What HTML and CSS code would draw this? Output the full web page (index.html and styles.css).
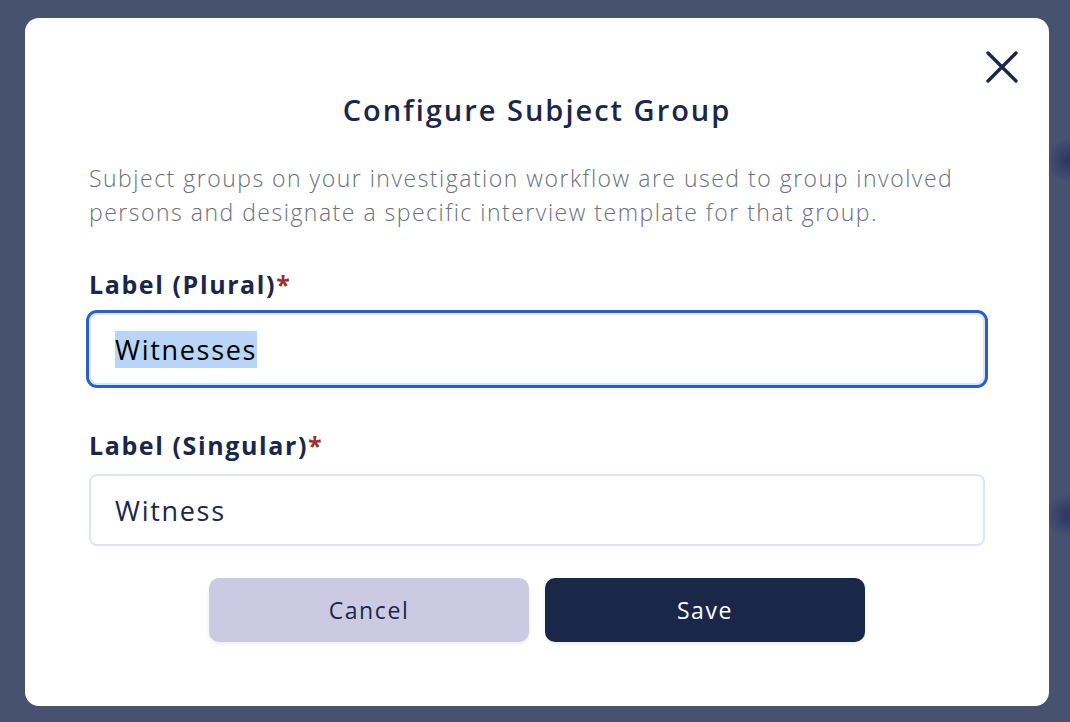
FILE: index.html
```html
<!DOCTYPE html>
<html lang="en">
<head>
  <meta charset="UTF-8">
  <meta name="viewport" content="width=device-width, initial-scale=1">
  <title>Configure Subject Group</title>
  <link rel="stylesheet" href="styles.css">
</head>
<body>

  <div class="modal">
    <button class="close" aria-label="Close">
      <svg width="34" height="34" viewBox="0 0 34 34">
        <path d="M3 3 L31 31 M31 3 L3 31" stroke="#1b2749" stroke-width="3.4" stroke-linecap="round" fill="none"/>
      </svg>
    </button>

    <h1>Configure Subject Group</h1>
    <p class="intro">
      Subject groups on your investigation workflow are used to group involved
      persons and designate a specific interview template for that group.
    </p>

    <label class="label" for="plural">Label (Plural)<span class="req">*</span></label>
    <input class="field" id="plural" type="text" value="Witnesses" autofocus>

    <label class="label" for="singular">Label (Singular)<span class="req">*</span></label>
    <input class="field" id="singular" type="text" value="Witness">

    <div class="actions">
      <button class="btn btn-cancel">Cancel</button>
      <button class="btn btn-save">Save</button>
    </div>
  </div>

  <script>
    const plural = document.getElementById("plural");
    plural.focus();
    plural.select();
  </script>

</body>
</html>
```

FILE: styles.css
```css
body {
  margin: 0;
  height: 722px;
  overflow: hidden;
  font-family: "Open Sans", Arial, sans-serif;
  background:
    radial-gradient(circle at 1068px 160px, #2f3465 0, rgba(47,52,101,0) 22px),
    radial-gradient(circle at 1068px 515px, #2f3465 0, rgba(47,52,101,0) 22px),
    #465270;
  padding: 18px 21px 0 25px;
  box-sizing: border-box;
}
.modal {
  position: relative;
  background: #fff;
  border-radius: 14px;
  height: 688px;
  box-sizing: border-box;
  padding: 74px 64px 0 64px;
  display: flex;
  flex-direction: column;
}
.close {
  position: absolute;
  top: 32px;
  right: 30px;
  padding: 0;
  border: none;
  background: none;
  cursor: pointer;
}
h1 {
  margin: 0;
  text-align: center;
  font-size: 29px;
  line-height: 36px;
  font-weight: 600;
  letter-spacing: 2px;
  color: #1b2749;
}
.intro {
  margin: 33px 0 40px;
  font-size: 23px;
  line-height: 34px;
  font-weight: 300;
  letter-spacing: 1.5px;
  color: #6b6f7b;
}
.label {
  font-size: 25px;
  line-height: 30px;
  font-weight: 700;
  letter-spacing: 1.6px;
  color: #1b2749;
  margin-bottom: 14px;
}
.req {
  color: #9b2f2f;
  letter-spacing: 0;
}
.field {
  height: 72px;
  box-sizing: border-box;
  border: 2px solid #dde3f0;
  border-radius: 8px;
  padding: 0 24px;
  font-family: inherit;
  font-size: 27px;
  letter-spacing: 1.7px;
  color: #1b2749;
  margin-bottom: 45px;
}
.field:focus {
  outline: 3px solid #2a5fc6;
}
.field::selection {
  background: #b8d4f7;
  color: #000;
}
.field:last-of-type {
  margin-bottom: 32px;
}
.actions {
  display: flex;
  justify-content: center;
  gap: 16px;
}
.btn {
  width: 320px;
  height: 64px;
  border: none;
  border-radius: 10px;
  font-family: inherit;
  font-size: 23px;
  letter-spacing: 1.6px;
  cursor: pointer;
  box-shadow: 0 2px 4px rgba(0,0,0,0.08);
}
.btn-cancel {
  background: #cccae3;
  color: #1b2749;
}
.btn-save {
  background: #1b2749;
  color: #fff;
}
```
